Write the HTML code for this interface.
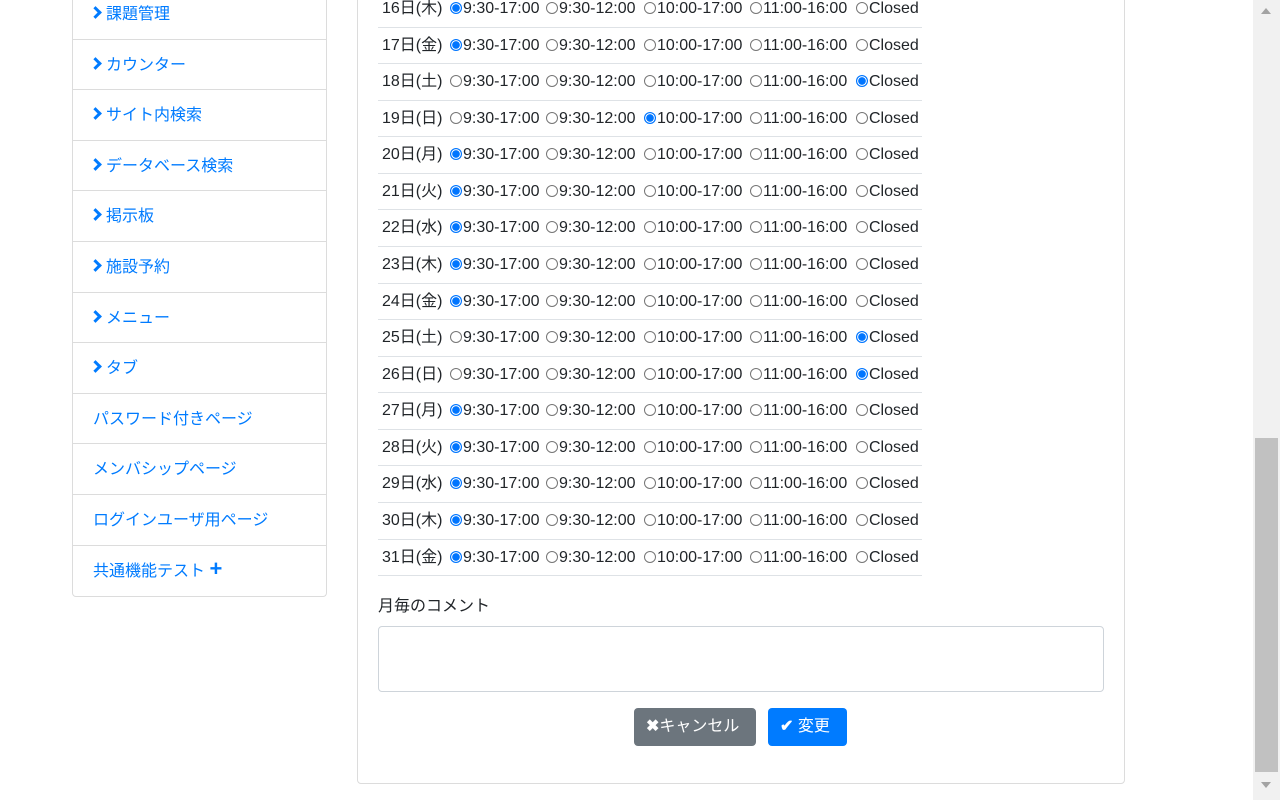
<!DOCTYPE html><html><head><meta charset="utf-8"><style>
*{box-sizing:border-box}body{margin:0;width:1280px;height:800px;overflow:hidden;background:#fff;font-family:"Liberation Sans","Noto Sans CJK JP",sans-serif;font-size:16px;color:#212529;position:relative}
.side{position:absolute;left:72px;top:-11px;width:255px;border:1px solid #dcdcdc;border-top:none;border-radius:0 0 4px 4px}
.side div{height:50.6px;border-bottom:1px solid #dcdcdc;color:#007bff;padding-left:20px;line-height:52px;white-space:nowrap}
.side div:last-child{border-bottom:none}
.chev{display:inline-block;width:9px;height:9px;border-right:3px solid #007bff;border-bottom:3px solid #007bff;transform:rotate(-45deg);margin-right:6px;margin-left:-2px;position:relative;top:-2px}
.card{position:absolute;left:357px;top:-20px;width:768px;height:804px;border:1px solid #dcdcdc;border-radius:4px}
.row{position:absolute;left:378px;width:544px;height:36.6px;border-bottom:1px solid #dee2e6;white-space:nowrap}
.row span{position:absolute;top:0;line-height:36px}
.r{display:inline-block;width:12px;height:12px;border:1px solid #767676;border-radius:50%;vertical-align:-1px;margin-right:1px}
.r.c{border:none;background:radial-gradient(circle,#0075ff 3.6px,#fff 4px,#fff 4.6px,#0075ff 5px)}
.btn{position:absolute;top:708px;height:38px;border-radius:4px;color:#fff;line-height:38px;font-size:16px;padding-left:12px}
</style></head><body>
<div class="side">
<div><span class="chev"></span>課題管理</div>
<div><span class="chev"></span>カウンター</div>
<div><span class="chev"></span>サイト内検索</div>
<div><span class="chev"></span>データベース検索</div>
<div><span class="chev"></span>掲示板</div>
<div><span class="chev"></span>施設予約</div>
<div><span class="chev"></span>メニュー</div>
<div><span class="chev"></span>タブ</div>
<div>パスワード付きページ</div>
<div>メンバシップページ</div>
<div>ログインユーザ用ページ</div>
<div>共通機能テスト <b style="font-size:22px;line-height:10px">+</b></div>
</div>
<div class="card"></div>
<div id="rows"></div>
<div style="position:absolute;left:378px;top:592px">月毎のコメント</div>
<div style="position:absolute;left:378px;top:626px;width:726px;height:66px;border:1px solid #ced4da;border-radius:4px"></div>
<div class="btn" style="left:634px;width:122px;background:#6c757d"><b>✖</b>キャンセル</div>
<div class="btn" style="left:768px;width:79px;background:#007bff"><b>✔</b> 変更</div>
<div style="position:absolute;left:1253px;top:0;width:27px;height:800px;background:#f1f1f1"></div>
<div style="position:absolute;left:1255px;top:438px;width:23px;height:334px;background:#c1c1c1"></div>
<div style="position:absolute;left:1261px;top:8px;border:5px solid transparent;border-bottom:6px solid #a3a3a3;border-top:none"></div>
<div style="position:absolute;left:1261px;top:782px;border:5px solid transparent;border-top:6px solid #a3a3a3;border-bottom:none"></div>
<script>
var d="木金土日月火水木金土日月火水木金",c=[0,0,4,2,0,0,0,0,0,4,4,0,0,0,0,0],L=["9:30-17:00","9:30-12:00","10:00-17:00","11:00-16:00","Closed"],X=[450,546,644,750,856],h="";
for(var i=0;i<16;i++){var t=-9+i*36.57;h+='<div class="row" style="top:'+t+'px"><span style="left:4px">'+(16+i)+'日('+d[i]+')</span>';
for(var j=0;j<5;j++)h+='<span style="left:'+(X[j]-378)+'px"><i class="r'+(c[i]==j?' c':'')+'"></i>'+L[j]+'</span>';h+='</div>'}
document.getElementById('rows').innerHTML=h;
</script>
</body></html>
